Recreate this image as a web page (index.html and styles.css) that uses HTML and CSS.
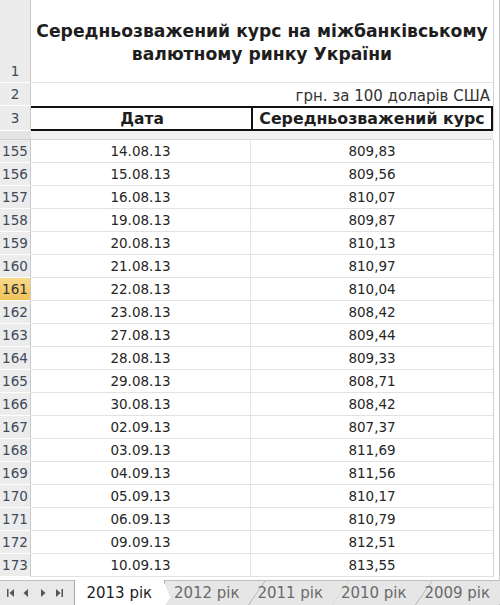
FILE: index.html
```html
<!DOCTYPE html>
<html lang="uk">
<head>
<meta charset="utf-8">
<link rel="stylesheet" href="styles.css">
</head>
<body>
<div class="sheet">
  <div class="grid">
    <div class="rh rh-tall">1</div>
    <div class="title">Середньозважений курс на міжбанківському<br>валютному ринку України</div>
    <div class="rh">2</div>
    <div class="unit">грн. за 100 доларів США</div>
    <div class="rh rh-h">3</div>
    <div class="hd hd-a">Дата</div>
    <div class="hd hd-b">Середньозважений курс</div>
  </div>
  <div class="freeze"><div class="freeze-rh"></div><div class="freeze-body"></div></div>
  <div class="grid data" id="data"></div>
  <div class="tabs">
    <div class="nav">
      <svg width="70" height="22" viewBox="0 0 70 22">
        <g fill="#555">
          <rect x="7" y="7" width="1.5" height="8"/>
          <polygon points="14,7 14,15 9.5,11"/>
          <polygon points="28,7 28,15 23.5,11"/>
          <polygon points="41,7 41,15 45.5,11"/>
          <polygon points="56,7 56,15 60.5,11"/>
          <rect x="61.5" y="7" width="1.5" height="8"/>
        </g>
      </svg>
    </div>
    <div class="tab active"><span>2013 рік</span></div>
    <div class="tab"><span>2012 рік</span></div>
    <div class="tab"><span>2011 рік</span></div>
    <div class="tab"><span>2010 рік</span></div>
    <div class="tab"><span>2009 рік</span></div>
  </div>
</div>
<script src="script.js"></script>
</body>
</html>
```

FILE: script.js
```js
const rows = [
  [155,"14.08.13","809,83"],[156,"15.08.13","809,56"],[157,"16.08.13","810,07"],
  [158,"19.08.13","809,87"],[159,"20.08.13","810,13"],[160,"21.08.13","810,97"],
  [161,"22.08.13","810,04"],[162,"23.08.13","808,42"],[163,"27.08.13","809,44"],
  [164,"28.08.13","809,33"],[165,"29.08.13","808,71"],[166,"30.08.13","808,42"],
  [167,"02.09.13","807,37"],[168,"03.09.13","811,69"],[169,"04.09.13","811,56"],
  [170,"05.09.13","810,17"],[171,"06.09.13","810,79"],[172,"09.09.13","812,51"],
  [173,"10.09.13","813,55"]
];
const g = document.getElementById('data');
for (const [n, d, v] of rows) {
  const rh = document.createElement('div');
  rh.className = 'rh' + (n === 161 ? ' sel' : '');
  rh.textContent = n;
  const a = document.createElement('div');
  a.className = 'cell cell-a';
  a.textContent = d;
  const b = document.createElement('div');
  b.className = 'cell cell-b';
  b.textContent = v;
  g.append(rh, a, b);
}
```

FILE: styles.css
```css
html, body {
  margin: 0;
  padding: 0;
  background: #ffffff;
}
body {
  font-family: "DejaVu Sans", Verdana, sans-serif;
  color: #2b2b2b;
  width: 500px;
  height: 605px;
  overflow: hidden;
}
.sheet {
  width: 500px;
  height: 605px;
  display: flex;
  flex-direction: column;
  border-right: 1px solid #c8c8c8;
  box-sizing: border-box;
}
.grid {
  display: grid;
  grid-template-columns: 31px 220px 242px;
  width: 493px;
  border-right: 1px solid #d0d0d0;
}
.rh {
  background: #ececec;
  border-right: 1px solid #c9c9c9;
  border-bottom: 1px solid #ffffff;
  box-sizing: border-box;
  font-size: 13.5px;
  color: #3d4a5a;
  display: flex;
  align-items: center;
  justify-content: center;
  height: 23px;
}
.rh-tall {
  height: 83px;
  align-items: flex-end;
  padding-bottom: 3px;
}
.rh-h { height: 25px; }
.title {
  grid-column: 2 / 4;
  height: 83px;
  box-sizing: border-box;
  border-bottom: 1px solid #e4e4e4;
  font-weight: bold;
  font-size: 17.2px;
  line-height: 23px;
  text-align: center;
  display: flex;
  align-items: center;
  justify-content: center;
  color: #1e1e1e;
  padding-top: 4px;
}
.unit {
  grid-column: 2 / 4;
  height: 23px;
  box-sizing: border-box;
  font-size: 15px;
  text-align: right;
  padding-right: 3px;
  display: flex;
  align-items: flex-end;
  justify-content: flex-end;
  padding-bottom: 1px;
  color: #333;
}
.hd {
  height: 25px;
  box-sizing: border-box;
  border-top: 2px solid #111;
  border-bottom: 2px solid #111;
  font-weight: bold;
  font-size: 15.5px;
  display: flex;
  align-items: center;
  justify-content: center;
  color: #1e1e1e;
}
.hd-a { padding-left: 2px; }
.hd-b {
  border-left: 2px solid #111;
  border-right: 2px solid #111;
  font-size: 15.8px;
}
.freeze {
  display: flex;
  height: 9px;
  width: 493px;
}
.freeze-rh {
  width: 31px;
  background: #e4e4e4;
  border-bottom: 1px solid #cfcfcf;
}
.freeze-body {
  flex: 1;
  background: #f1f1f1;
  border-bottom: 1px solid #d6d6d6;
}
.data .rh { height: 23px; }
.rh.sel {
  background: linear-gradient(#f9d98a, #f1c35a);
  color: #333;
}
.cell {
  height: 23px;
  box-sizing: border-box;
  border-bottom: 1px solid #e2e2e2;
  font-size: 13.5px;
  display: flex;
  align-items: center;
  justify-content: center;
  color: #262626;
}
.cell-a { border-right: 1px solid #e6e6e6; }
.tabs {
  margin-top: auto;
  height: 24px;
  display: flex;
  align-items: stretch;
  background: #e9e9e9;
  border-top: 1px solid #bdbdbd;
  font-size: 15px;
  color: #6a6a6a;
}
.nav {
  width: 74px;
  display: flex;
  align-items: center;
}
.tab {
  position: relative;
  width: 84px;
  display: flex;
  align-items: center;
  justify-content: center;
}
.tab::before {
  content: "";
  position: absolute;
  top: 0;
  right: 0;
  bottom: 0;
  left: 0;
  border-right: 1px solid #a9a9a9;
  transform: skewX(-35deg);
  transform-origin: bottom left;
  background: #e6e6e6;
}
.tab span { position: relative; }
.tab.active {
  width: 92px;
  color: #1e1e1e;
  margin-top: -1px;
}
.tab.active::before {
  background: #ffffff;
  border-left: 1px solid #a9a9a9;
  transform: none;
  right: 0;
}
.tab.active::after {
  content: "";
  position: absolute;
  top: 0;
  bottom: 0;
  right: -8px;
  width: 10px;
  background: linear-gradient(to top right, #ffffff 50%, transparent 51%);
}
```
